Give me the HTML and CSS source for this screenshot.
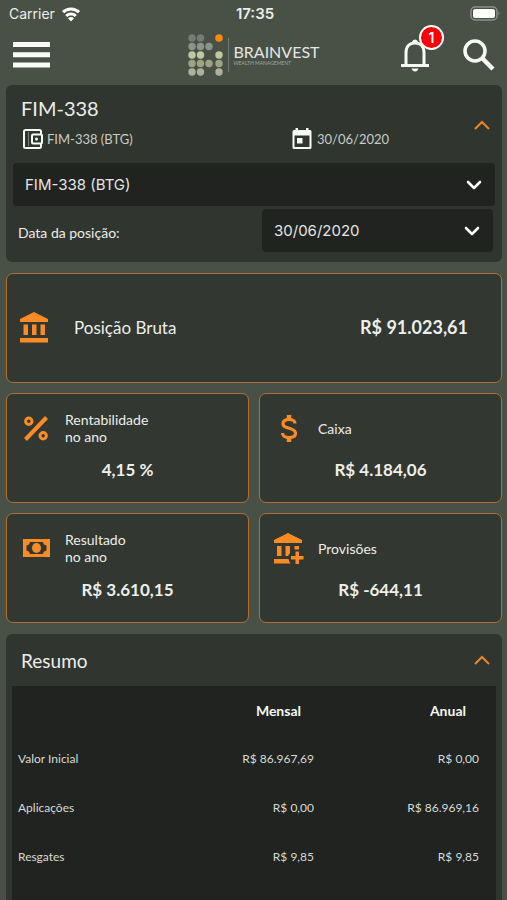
FILE: index.html
```html
<!DOCTYPE html>
<html lang="pt-BR">
<head>
<meta charset="utf-8">
<meta name="viewport" content="width=device-width, initial-scale=1">
<title>Brainvest</title>
<link rel="stylesheet" href="styles.css">
</head>
<body>
<div class="status">
  <div class="carrier">Carrier
    <svg width="20" height="16" viewBox="0 0 20 16" fill="none" stroke="#fff" stroke-width="3"><path d="M2 6.200a11.500 11.500 0 0 1 16 0"/><path d="M5.200 10a7 7 0 0 1 9.600 0"/><path d="M7 12.200a4.600 4.600 0 0 1 6 0L10 15.500z" fill="#fff" stroke="none"/></svg>
  </div>
  <time class="clock">17:35</time>
  <svg class="battery" width="31" height="16" viewBox="0 0 31 16"><rect x="1" y="1" width="26" height="13" rx="4" fill="none" stroke="#899087" stroke-width="1.500"/><rect x="3" y="3" width="22" height="9" rx="2" fill="#fff"/><path d="M28.500 5.500q2 2 0 4z" fill="#899087"/></svg>
</div>
<header class="top">
  <button class="icon-btn menu" aria-label="Menu"><svg width="37" height="26" viewBox="0 0 37 26" fill="#f8faf6"><path d="M0 0h37v5H0zM0 10.300h37v5H0zM0 20.500h37v5H0z"/></svg></button>
  <a class="logo" href="#">
    <svg width="42" height="43" viewBox="0 0 42 43">
      <g fill="#747d73"><circle cx="4" cy="5" r="3.700"/><circle cx="12.500" cy="5" r="3.700"/></g>
      <circle cx="31" cy="5" r="3.800" fill="#fb8a09"/>
      <g fill="#8c9489"><circle cx="4" cy="13.500" r="3.700"/><circle cx="12.500" cy="13.500" r="3.700"/><circle cx="21" cy="13.500" r="3.700"/></g>
      <g fill="#c2c7a2"><circle cx="4" cy="22" r="3.700"/><circle cx="12.500" cy="22" r="3.700"/><circle cx="31" cy="22" r="3.700"/></g>
      <g fill="#9da384"><circle cx="4" cy="30.500" r="3.700"/><circle cx="12.500" cy="30.500" r="3.700"/><circle cx="21" cy="30.500" r="3.700"/><circle cx="31" cy="30.500" r="3.700"/></g>
      <g fill="#b0b0a1"><circle cx="4" cy="39" r="3.700"/><circle cx="12.500" cy="39" r="3.700"/><circle cx="31" cy="39" r="3.700"/></g>
      <path d="M40.500 5v34" stroke="#747b71"/>
    </svg>
    <span class="brand"><span class="name">BRAINVEST</span><span class="tag">WEALTH MANAGEMENT</span></span>
  </a>
  <div class="actions">
    <button class="icon-btn bell" aria-label="Notificações">
      <svg width="28" height="34" viewBox="0 0 28 34" fill="none" stroke="#f8faf6" stroke-width="3"><path d="M5 27V14.500C5 8.500 8.500 5 14 5s9 3.500 9 9.500V27"/><path d="M0 27.500h28" stroke-width="3"/><path d="M11.500 4.500a2.500 2.500 0 0 1 5 0z" fill="#f8faf6" stroke-width="1"/><path d="M10.500 30.500h7q-1 3-3.500 3t-3.500-3z" fill="#f8faf6" stroke="none"/></svg>
      <span class="badge">1</span>
    </button>
    <button class="icon-btn" aria-label="Buscar"><svg width="32" height="32" viewBox="0 0 32 32" fill="none" stroke="#f8faf6"><circle cx="12" cy="12" r="10" stroke-width="3.500"/><path d="M19.500 19.500l10.500 10.500" stroke-width="4.500"/></svg></button>
  </div>
</header>
<main>
  <section class="panel account">
    <div class="account-head">
      <div class="account-info">
        <h1>FIM-338</h1>
        <div class="meta">
          <span class="meta-item"><svg width="22" height="20" viewBox="0 0 22 20" fill="none" stroke="#f8faf6" stroke-width="2"><path d="M20 5V2.500Q20 1 18.500 1h-14Q3 1 3 2.500v15Q3 19 4.500 19h14q1.500 0 1.500-1.500V15"/><path d="M7.500 3v14" stroke="#7d837b" stroke-width="1"/><rect x="11" y="5.500" width="10" height="9" rx="1"/><circle cx="15.500" cy="10" r="1.500" fill="#f8faf6" stroke="none"/></svg>FIM-338 (BTG)</span>
          <span class="meta-item"><svg width="22" height="22" viewBox="0 0 22 22"><path fill="#f8faf6" fill-rule="evenodd" d="M4.500 0h2.500v2h8V0h2.500v2H19q1.500 0 1.500 1.500v16q0 1.500-1.500 1.500H3q-1.500 0-1.500-1.500v-16Q1.500 2 3 2h1.500zM3.500 7.500V19h15V7.500zM6 10h5.500v5.500H6z"/></svg>30/06/2020</span>
        </div>
      </div>
      <button class="icon-btn" aria-label="Recolher conta"><svg width="16" height="10" viewBox="0 0 16 10" fill="none" stroke="#e8862b" stroke-width="2"><path d="M1 9l7-7 7 7"/></svg></button>
    </div>
    <div class="select">
      <select aria-label="Conta"><option>FIM-338 (BTG)</option></select>
      <svg width="16" height="10" viewBox="0 0 16 10" fill="none" stroke="#fff" stroke-width="2.600" stroke-linecap="round" stroke-linejoin="round"><path d="M2 2l6 6 6-6"/></svg>
    </div>
    <div class="date-row">
      <label for="data">Data da posição:</label>
      <div class="select">
        <select id="data"><option>30/06/2020</option></select>
        <svg width="16" height="10" viewBox="0 0 16 10" fill="none" stroke="#fff" stroke-width="2.600" stroke-linecap="round" stroke-linejoin="round"><path d="M2 2l6 6 6-6"/></svg>
      </div>
    </div>
  </section>

  <section class="cards">
    <article class="card wide">
      <svg width="28" height="31" viewBox="0 0 28 31" fill="#fb8b24"><path d="M14 0l14 7v3H0V7zM3.500 12.500H8V23H3.500zM12 12.500h4.500V23H12zM20.500 12.500H25V23h-4.500zM0 26h28v4.500H0z"/></svg>
      <h2>Posição Bruta</h2>
      <strong>R$ 91.023,61</strong>
    </article>
    <article class="card">
      <div class="card-head"><span class="ico"><svg width="24" height="25" viewBox="0 0 24 25" fill="none" stroke="#fb8b24" stroke-width="3"><path d="M1.500 23.500l21-22" stroke-width="4"/><circle cx="4.800" cy="5.200" r="3.200"/><circle cx="19.200" cy="19.800" r="3.200"/></svg></span><h2>Rentabilidade<br>no ano</h2></div>
      <strong>4,15 %</strong>
    </article>
    <article class="card">
      <div class="card-head"><span class="ico"><svg width="16" height="27" viewBox="0 0 16 27" fill="none" stroke="#fb8b24" stroke-width="3.200"><path d="M14 8.500C14 5.500 11.500 4.500 8 4.500S2 6 2 8.800c0 2.900 2.500 3.700 6 4.500s6.500 1.800 6.500 4.900-3 4.300-6.500 4.300-6.500-1.500-6.500-4.500"/><path d="M8 0v5M8 22v5" stroke-width="4.500"/></svg></span><h2>Caixa</h2></div>
      <strong>R$ 4.184,06</strong>
    </article>
    <article class="card">
      <div class="card-head"><span class="ico"><svg width="27" height="18" viewBox="0 0 27 18"><path fill="#fb8b24" d="M0 0h27v18H0z"/><path fill="#323731" d="M7 3h13q.5 3 3.500 3.500v5Q20.500 12 20 15H7q-.5-3-3.500-3.500v-5Q6.500 6 7 3z"/><ellipse cx="13.500" cy="9" rx="4.500" ry="5" fill="#fb8b24"/></svg></span><h2>Resultado<br>no ano</h2></div>
      <strong>R$ 3.610,15</strong>
    </article>
    <article class="card">
      <div class="card-head"><span class="ico"><svg width="30" height="31" viewBox="0 0 30 31" fill="#fb8b24"><path d="M14 0l14 7v3H0V7zM3 13h4.500v10H3zM11.500 13H16v7l-2 3h-2.500zM20.500 13H25v3.500h-4.500zM0 26h14.500q.5 2.500 2 4.500H0zM21.500 18.500H25V23h4.500v3.500H25V31h-3.500v-4.500H17V23h4.500z"/></svg></span><h2>Provisões</h2></div>
      <strong>R$ -644,11</strong>
    </article>
  </section>

  <section class="panel summary">
    <div class="summary-head">
      <h2>Resumo</h2>
      <button class="icon-btn" aria-label="Recolher resumo"><svg width="16" height="10" viewBox="0 0 16 10" fill="none" stroke="#e8862b" stroke-width="2"><path d="M1 9l7-7 7 7"/></svg></button>
    </div>
    <div class="table-box">
      <table>
        <thead><tr><td></td><th scope="col">Mensal</th><th scope="col">Anual</th></tr></thead>
        <tbody>
          <tr><th scope="row">Valor Inicial</th><td>R$ 86.967,69</td><td>R$ 0,00</td></tr>
          <tr><th scope="row">Aplicações</th><td>R$ 0,00</td><td>R$ 86.969,16</td></tr>
          <tr><th scope="row">Resgates</th><td>R$ 9,85</td><td>R$ 9,85</td></tr>
        </tbody>
      </table>
    </div>
  </section>
</main>
</body>
</html>
```
FILE: styles.css
```css
* { box-sizing: border-box; }
body {
  margin: 0;
  min-height: 100vh;
  display: flex;
  flex-direction: column;
  background: #495147;
  color: #eceeea;
  font-family: Lato, "Liberation Sans", sans-serif;
}
h1, h2 { margin: 0; font-weight: 400; }
svg { display: block; flex: none; }
.icon-btn { padding: 0; border: 0; background: none; color: inherit; font: inherit; position: relative; }

.status {
  display: grid;
  grid-template-columns: 1fr auto 1fr;
  align-items: center;
  height: 28px;
  padding: 0 6px 0 9px;
  font: 15px/18px Inter, sans-serif;
}
.carrier { display: flex; align-items: center; gap: 6px; font-size: 14px; }
.clock { font-weight: 600; }
.battery { justify-self: end; }

.top {
  display: grid;
  grid-template-columns: 1fr auto 1fr;
  align-items: center;
  height: 57px;
  padding: 0 12px 4px 13px;
}
.menu { justify-self: start; }
.logo { display: flex; align-items: center; gap: 3px; color: #e4e7e1; text-decoration: none; }
.brand { display: flex; flex-direction: column; }
.name { font-size: 16px; line-height: 17px; }
.tag { font-size: 5px; line-height: 6px; color: #a1a79e; }
.actions { display: flex; justify-content: flex-end; align-items: center; gap: 34px; }
.badge {
  position: absolute;
  top: -13px;
  right: -15px;
  width: 25px;
  height: 25px;
  border: 2px solid #fff;
  border-radius: 50%;
  background: #fb0007;
  color: #fff;
  font: 600 14px/21px Inter, sans-serif;
  text-align: center;
}

main { flex: 1; display: flex; flex-direction: column; padding: 0 5px 0 6px; }
.panel { background: #30352f; border-radius: 6px; }
.account { padding: 10px 7px 10px 7px; }
.account-head { display: flex; align-items: flex-start; height: 68px; padding: 0 5px 0 8px; }
.account-head .icon-btn { margin-top: 25px; }
.account-info { flex: 1; }
h1 { font-size: 20px; line-height: 27px; }
.meta { display: grid; grid-template-columns: 270px 1fr; height: 33px; align-items: center; }
.meta-item { display: flex; align-items: center; gap: 4px; font-size: 13px; color: #c9ccc7; }

.select { display: grid; align-items: center; }
.select > * { grid-area: 1 / 1; }
.select svg { justify-self: end; margin-right: 13px; pointer-events: none; }
select {
  appearance: none;
  width: 100%;
  height: 43px;
  padding: 0 12px;
  border: 0;
  border-radius: 4px;
  background: #20231f;
  color: #e4e6e2;
  font: 15px Inter, sans-serif;
}
.date-row { display: grid; grid-template-columns: 1fr 231px; align-items: center; padding: 3px 2px 0 5px; }
.date-row label { font-size: 14px; padding-top: 4px; }

.cards { display: grid; grid-template-columns: 1fr 1fr; gap: 10px; margin: 11px 0; }
.card {
  height: 110px;
  border: 1px solid #b06f30;
  border-radius: 7px;
  background: #323731;
}
.wide { grid-column: span 2; display: flex; align-items: center; padding: 0 33px 2px 13px; }
.wide h2 { flex: 1; margin-left: 26px; font-size: 17px; }
.card strong { display: block; font-size: 17px; line-height: 22px; font-weight: 700; text-align: center; }
.card.wide strong { font-size: 18px; }
.card-head { display: grid; grid-template-columns: 58px 1fr; align-items: center; height: 65px; padding-top: 3px; }
.card-head h2 { font-size: 14px; line-height: 17px; }
.ico { display: grid; place-items: center; }

.summary { flex: 1; display: flex; flex-direction: column; padding: 0 6px; border-radius: 6px 6px 0 0; }
.summary-head { display: flex; align-items: center; justify-content: space-between; height: 52px; padding: 0 6px 0 9px; }
.summary-head h2 { font-size: 19px; }
.table-box { flex: 1; background: #20231f; }
table { width: 100%; border-collapse: collapse; table-layout: fixed; }
tr { height: 49px; }
thead tr { height: 48px; }
td, th { padding: 0 17px 0 0; text-align: right; font-size: 12px; font-weight: 400; color: #d7dad5; }
td:first-child, th:first-child { width: 154px; padding: 0 0 0 6px; text-align: left; }
thead th { padding-right: 30px; font-size: 14px; font-weight: 700; color: #f4f6f2; }
```
